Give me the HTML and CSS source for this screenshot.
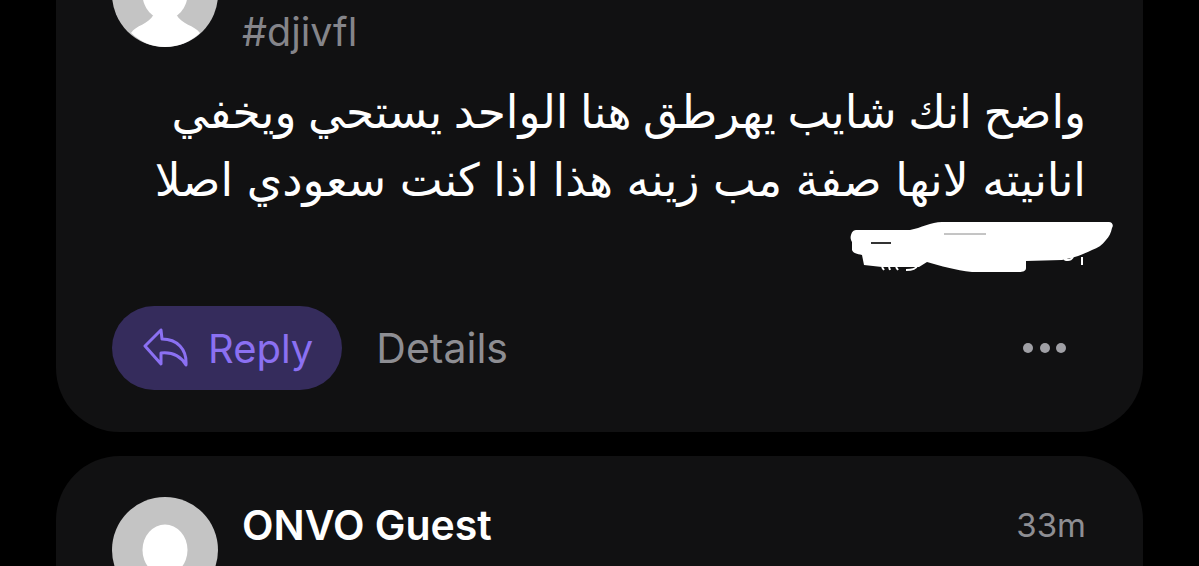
FILE: index.html
```html
<!DOCTYPE html>
<html lang="en">
<head>
    <meta charset="UTF-8">
    <meta name="viewport" content="width=device-width, initial-scale=1.0">
    <title>Comments</title>
    <link rel="stylesheet" href="styles.css">
</head>
<body>
    <div class="feed">
        <div class="card">
            <div class="card-head">
                <svg class="avatar" viewBox="0 0 106 106">
                    <circle cx="53" cy="53" r="53" fill="#c4c4c4"/>
                    <ellipse cx="53" cy="53" rx="22.5" ry="25.5" fill="#fff"/>
                    <path d="M19 92C24 84 36 84 42 73H64C70 84 82 84 88 92C78 101 66 106 53 106C40 106 29 101 19 92Z" fill="#fff"/>
                </svg>
                <div class="meta">
                    <div class="meta-row"></div>
                    <div class="tag">#djivfl</div>
                </div>
            </div>
            <div class="message" dir="rtl" lang="ar">
                <div class="line line-tight">واضح انك شايب يهرطق هنا الواحد يستحي ويخفي</div>
                <div class="line line-wide">انانيته لانها صفة مب زينه هذا اذا كنت سعودي اصلا</div>
                <div class="line line-hidden">
                    <svg class="scribble" viewBox="0 0 266 52">
                        <path d="M2 13C3 9 5 8 8 8H61C72 6 82 0 93 0H260C263 0 265 3 263 6C262 11 260 15 257 18C253 23 249 26 243 28C233 33 224 36 213 38L177 39V46C177 49 174 50 170 50H123C106 48 92 44 78 40L70 45H33L15 43L13 33C8 32 4 31 3 28V20C2 18 1 16 2 13Z" fill="#fff"/>
                        <path d="M95 12H137" stroke="#8a8a8a" stroke-width="1"/>
                        <path d="M22 21H42" stroke="#333" stroke-width="2"/>
                        <path d="M33 45l2 3M40 45l1 3M47 45l2 3M68 44C67 47 62 48 57 48" stroke="#fff" stroke-width="2" fill="none"/>
                        <path d="M215 37C219 39 222 38 224 35M233 35V43" stroke="#fff" stroke-width="2" fill="none"/>
                    </svg>
                </div>
            </div>
            <div class="actions">
                <a class="btn-reply">
                    <svg class="reply-icon" viewBox="0 0 46 40">
                        <path d="M18 2L2 18L18 36V25C28 24 37 27 43 37C44 21 34 11 19 11Z"/>
                    </svg>
                    Reply
                </a>
                <a class="btn-details">Details</a>
                <div class="dots"><span></span><span></span><span></span></div>
            </div>
        </div>
        <div class="card">
            <div class="card-head">
                <svg class="avatar" viewBox="0 0 106 106">
                    <circle cx="53" cy="53" r="53" fill="#c4c4c4"/>
                    <ellipse cx="53" cy="53" rx="22.5" ry="25.5" fill="#fff"/>
                    <path d="M19 92C24 84 36 84 42 73H64C70 84 82 84 88 92C78 101 66 106 53 106C40 106 29 101 19 92Z" fill="#fff"/>
                </svg>
                <div class="meta">
                    <div class="meta-row">
                        <span class="name">ONVO Guest</span>
                        <span class="time">33m</span>
                    </div>
                </div>
            </div>
        </div>
    </div>
</body>
</html>
```

FILE: styles.css
```css
html, body {
    height: 566px;
    overflow: hidden;
}
body {
    margin: 0;
    padding: 0;
    background: #000;
    font-family: Inter, "DejaVu Sans", sans-serif;
}
.feed {
    margin: -100px 56px 0;
    display: flex;
    flex-direction: column;
    gap: 24px;
}
.card {
    background-color: #111112;
    border-radius: 64px;
    padding: 41px 57px 42px 56px;
}
.card-head {
    display: flex;
    gap: 24px;
}
.avatar {
    width: 106px;
    height: 106px;
    flex-shrink: 0;
}
.meta {
    flex: 1;
}
.meta-row {
    display: flex;
    justify-content: space-between;
    align-items: center;
    height: 56px;
}
.name {
    color: #fff;
    font-size: 41px;
    font-weight: 600;
}
.time {
    color: #8e8e93;
    font-size: 33px;
}
.tag {
    margin-top: 20px;
    line-height: 30px;
    color: #85858a;
    font-size: 39.5px;
}
.message {
    margin-top: 31px;
    color: #fff;
    font-size: 45.5px;
    line-height: 68px;
    white-space: nowrap;
}
.line {
    height: 68px;
}
.line-tight {
    word-spacing: -1.3px;
}
.line-wide {
    word-spacing: 0.8px;
}
.line-hidden {
    position: relative;
    height: 71px;
}
.scribble {
    position: absolute;
    right: -29px;
    top: 8px;
    width: 266px;
    height: 52px;
}
.actions {
    margin-top: 21px;
    display: flex;
    align-items: center;
    gap: 34px;
}
.btn-reply {
    display: flex;
    align-items: center;
    gap: 19px;
    height: 84px;
    padding: 0 29px 0 31px;
    border-radius: 42px;
    background-color: #352c5c;
    color: #8b70f2;
    font-size: 40px;
}
.reply-icon {
    width: 46px;
    height: 40px;
    fill: none;
    stroke: #8b70f2;
    stroke-width: 3;
    stroke-linejoin: round;
}
.btn-details {
    color: #8e8e93;
    font-size: 41px;
}
.dots {
    margin-left: auto;
    margin-right: 20px;
    display: flex;
    gap: 6.5px;
}
.dots span {
    width: 10px;
    height: 10px;
    border-radius: 50%;
    background-color: #a0a0a5;
}
```
